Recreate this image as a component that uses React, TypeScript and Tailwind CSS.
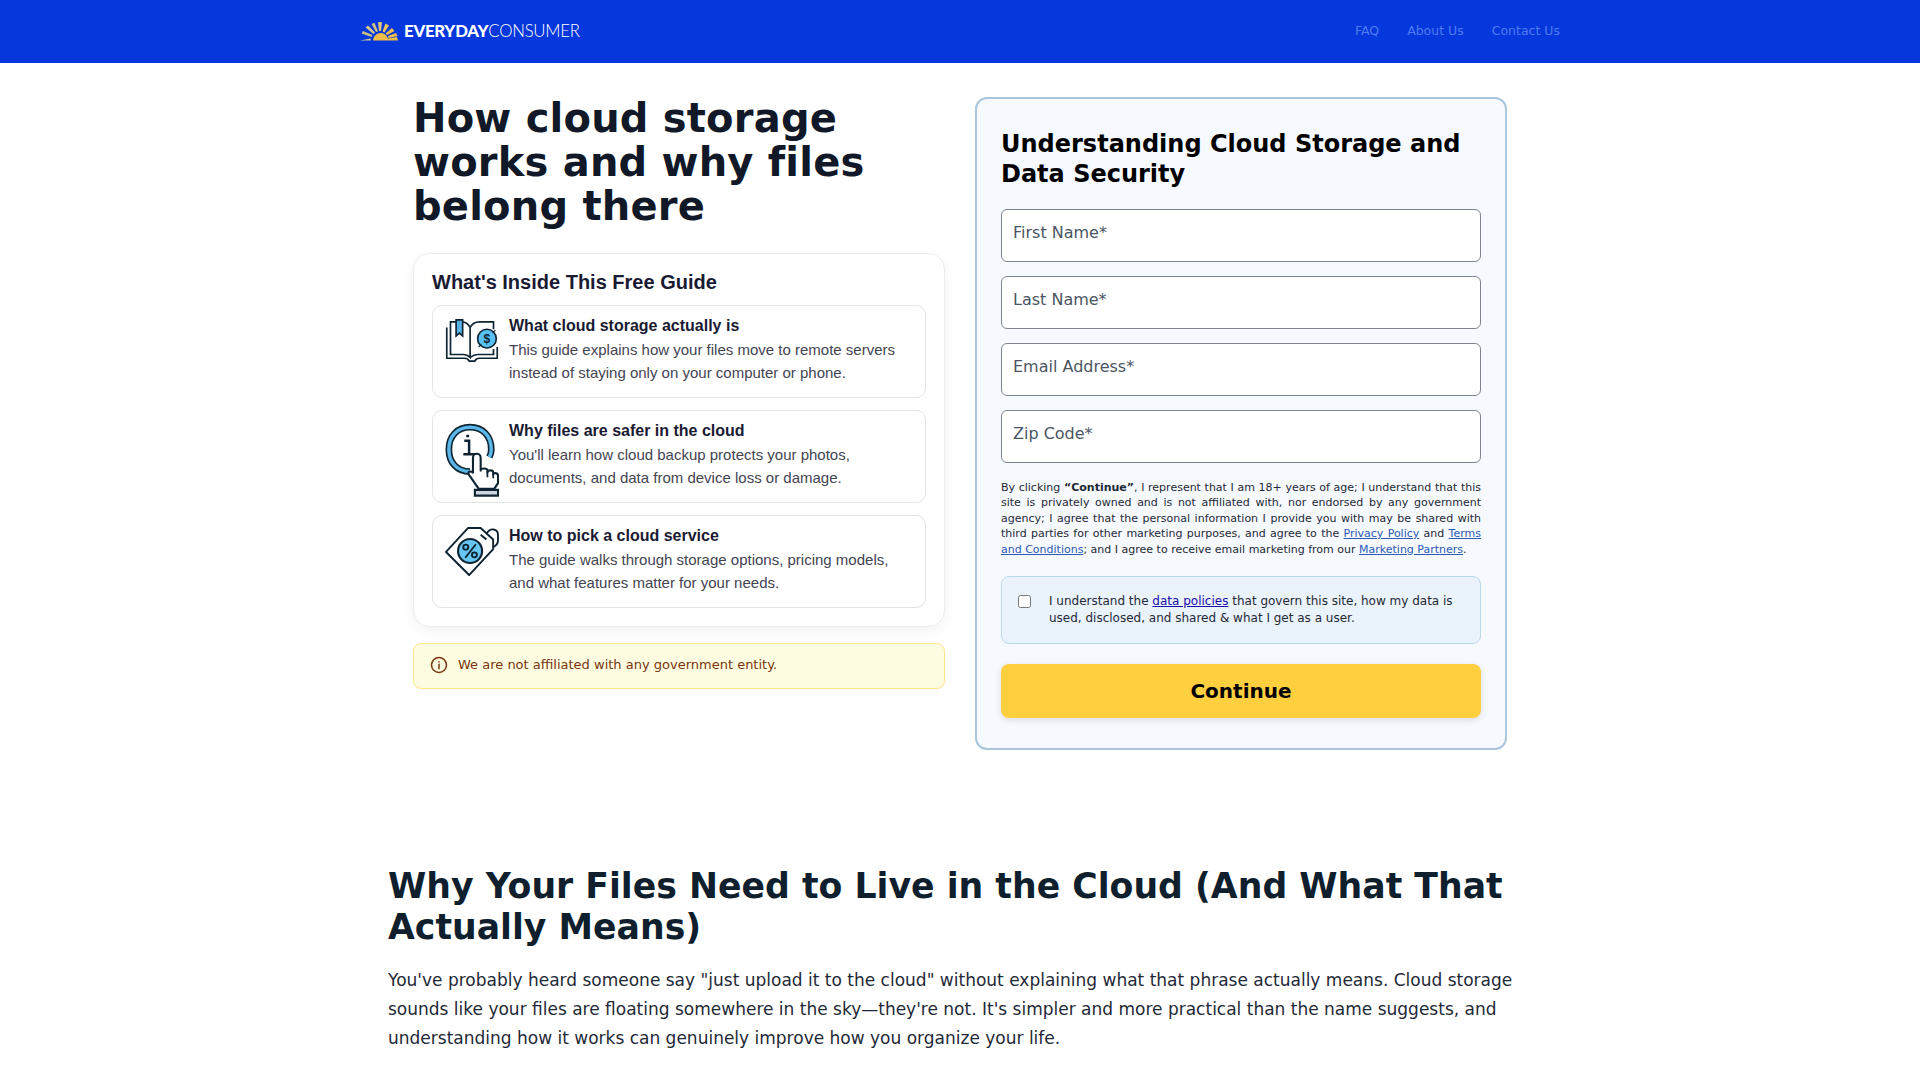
const guideItems = [
  {
    title: 'What cloud storage actually is',
    lines: ['This guide explains how your files move to remote servers', 'instead of staying only on your computer or phone.'],
    icon: 'book',
  },
  {
    title: 'Why files are safer in the cloud',
    lines: ["You'll learn how cloud backup protects your photos,", 'documents, and data from device loss or damage.'],
    icon: 'hand',
  },
  {
    title: 'How to pick a cloud service',
    lines: ['The guide walks through storage options, pricing models,', 'and what features matter for your needs.'],
    icon: 'tag',
  },
];

const fields = ['First Name*', 'Last Name*', 'Email Address*', 'Zip Code*'];

function Logo() {
  return (
    <svg width="38" height="19" viewBox="0 0 38 19" className="shrink-0">
      <path d="M0 18.5 L10.5 16.5 L11 18.5 Z" fill="#d6c88e" />
      <path d="M1.5 11.5 L11.5 15 L12.5 13 L3 9 Z" fill="#c9bd86" />
      <path d="M5.5 5.5 L13.5 12 L15 10.5 L8 3.5 Z" fill="#d8c98a" />
      <path d="M11.5 2 L16 10 L18 9.5 L14.5 0.8 Z" fill="#cfc084" />
      <path d="M18 0 L19 9 L21 9 L22 0.3 Z" fill="#e0c878" />
      <path d="M25.5 1.5 L22.5 9.5 L24.5 10.5 L29 3.5 Z" fill="#ebc35c" />
      <path d="M32 6 L25.5 11.5 L27 13 L34.5 9 Z" fill="#eebf4c" />
      <path d="M36 11 L28 14 L28.5 16 L37.5 14 Z" fill="#f0c04a" />
      <path d="M13 18.5 C13.5 13 18 10.5 22 11 C25 11.5 27 14 28 16.5 L37 15 L38 18.5 Z" fill="#eebd48" />
    </svg>
  );
}

function GuideIcon({ name }: { name: string }) {
  if (name === 'book') {
    return (
      <svg width="54" height="43" viewBox="0 0 56 46" fill="none" stroke="#0f2433" strokeWidth="1.8" className="mt-[3px] shrink-0">
        <path d="M1 9v33h19c3 0 4 1 5 3h6c1-2 2-3 5-3h19V30" />
        <path d="M5 3v35h14c3 0 5 1 7 3V9c-2-4-5-6-9-6H5z" fill="#fff" />
        <path d="M26 41c3-2 5-3 8-3h17v-6M26 9c2-4 6-6 10-6h15v8" />
        <path d="M11 1h7v17l-3.5-3-3.5 3V1z" fill="#58b4e6" />
        <circle cx="44" cy="21" r="10" fill="#58c1f2" />
        <path d="M35 30l3-3M50 15l3-3" strokeWidth="1.2" />
        <text x="44" y="26" fontSize="13" fontWeight="700" textAnchor="middle" fill="#0f2433" stroke="none" fontFamily="'Liberation Sans', sans-serif">$</text>
      </svg>
    );
  }
  if (name === 'hand') {
    return (
      <svg width="54" height="74" viewBox="0 0 56 76" fill="none" className="mt-[2px] shrink-0">
        <path d="M26 50C12 50 4 40 4 27 4 13 13 4 26 4c13 0 22 9 22 23 0 3-1 6-2 8" stroke="#0f2433" strokeWidth="7" />
        <path d="M26 50C12 50 4 40 4 27 4 13 13 4 26 4c13 0 22 9 22 23 0 3-1 6-2 8" stroke="#5ab7e8" strokeWidth="3.6" />
        <path d="M20 18h5v13M19 32h13M22 13h3" stroke="#0f2433" strokeWidth="2.6" />
        <path d="M29 50V36c0-6 8-6 8 0v13c0-3 7-3 7 0v2c0-3 6-3 6 0v2c0-2 5-2 5 1v8l-4 6H35l-9-13c-3-3-2-7 3-4z" fill="#fff" stroke="#0f2433" strokeWidth="2.2" strokeLinejoin="round" />
        <path d="M44 50v6M50 52v5" stroke="#0f2433" strokeWidth="1.8" />
        <path d="M31 69h24v6H31z" fill="#ccd6e0" stroke="#0f2433" strokeWidth="2.2" />
      </svg>
    );
  }
  return (
    <svg width="54" height="50" viewBox="0 0 56 52" fill="none" stroke="#0f2433" strokeWidth="2" strokeLinejoin="round" className="shrink-0">
      <path d="M1 27 L24 2 H37 L50 14 V24 L25 51 Z" fill="#fff" />
      <path d="M37 9 L43 14 M43 8 C47 1 55 3 55 9 V15 C55 19 52 21 50 22" />
      <circle cx="26" cy="26" r="12.5" fill="#67c6f2" strokeWidth="2.2" />
      <path d="M21 33 L32 19" strokeWidth="2" />
      <circle cx="21.5" cy="22" r="2.6" />
      <circle cx="30.5" cy="30" r="2.6" />
    </svg>
  );
}

function GuideCard() {
  return (
    <div className="rounded-2xl border border-[#ececec] bg-white px-[18px] pb-[18px] pt-[14px] shadow-[0_4px_14px_rgba(0,0,0,0.05)] font-['Liberation_Sans',Arial,sans-serif]">
      <h3 className="mb-[9px] text-[20px] font-bold leading-[28px] text-[#1a1a33]">What's Inside This Free Guide</h3>
      <div className="flex flex-col gap-3">
        {guideItems.map((item) => (
          <div key={item.title} className="flex h-[93px] gap-[10px] rounded-[10px] border border-[#e2e4e8] bg-white pl-[12px] pt-[10px]">
            <GuideIcon name={item.icon} />
            <div className="min-w-0">
              <div className="text-[16px] font-bold leading-[20px] text-[#1a1a33]">{item.title}</div>
              <div className="mt-[2px] text-[15px] leading-[23px] text-[#444452]">
                {item.lines.map((line) => (
                  <div key={line} className="whitespace-nowrap">{line}</div>
                ))}
              </div>
            </div>
          </div>
        ))}
      </div>
    </div>
  );
}

export default function App() {
  return (
    <div className="min-h-screen bg-white font-['DejaVu_Sans',sans-serif] text-[#111827]">
      <header className="h-[63px] bg-[#0437dc]">
        <div className="mx-auto flex h-[62px] max-w-[1200px] items-center justify-between">
          <div className="flex items-center gap-[6px]">
            <Logo />
            <div className="text-[16.8px] tracking-[-0.25px] text-white font-['Lato',sans-serif]">
              <span className="font-black">EVERYDAY</span>
              <span className="font-light">CONSUMER</span>
            </div>
          </div>
          <nav className="flex gap-7 text-[12.5px] text-[#4f7df0]">
            <a>FAQ</a>
            <a>About Us</a>
            <a>Contact Us</a>
          </nav>
        </div>
      </header>

      <main className="mx-auto flex max-w-[1094px] items-start gap-[30px] pt-[34px]">
        <div className="w-[532px] shrink-0">
          <h1 className="-mt-[1px] mb-[25px] text-[40px] font-bold leading-[44px] tracking-[0.2px] text-[#111827]">
            How cloud storage works and why files belong there
          </h1>
          <GuideCard />
          <div className="mt-[16px] flex h-[46px] items-center gap-[10px] rounded-lg border border-[#fde68a] bg-[#fefce0] pb-[2px] pl-[16px] text-[13px] text-[#78350f]">
            <svg width="18" height="18" viewBox="0 0 24 24" fill="none" stroke="#78350f" strokeWidth="2" strokeLinecap="round" className="shrink-0">
              <circle cx="12" cy="12" r="10" />
              <path d="M12 11v6M12 7.5v.5" />
            </svg>
            <span>We are not affiliated with any government entity.</span>
          </div>
        </div>

        <form className="w-[532px] shrink-0 rounded-xl border-2 border-[#a9c6dc] bg-[#f6f9fe] px-6 pb-[30px] pt-[30px]">
          <h2 className="mb-[20px] text-[24px] font-bold leading-[30px] text-black">
            Understanding Cloud Storage and Data Security
          </h2>
          <div className="flex flex-col gap-[14px]">
            {fields.map((field) => (
              <div key={field} className="h-[53px] rounded-md border border-[#7d8690] bg-white px-[11px] pt-[12px] text-[16px] leading-[22px] text-[#4b5563]">
                {field}
              </div>
            ))}
          </div>
          <p className="mt-[17px] text-justify text-[11px] leading-[15.4px] text-[#1f2937]">
            By clicking <strong>“Continue”</strong>, I represent that I am 18+ years of age; I understand that this site is privately owned and is not affiliated with, nor endorsed by any government agency; I agree that the personal information I provide you with may be shared with third parties for other marketing purposes, and agree to the{' '}
            <a className="text-[#2b59b5] underline">Privacy Policy</a> and{' '}
            <a className="text-[#2b59b5] underline">Terms and Conditions</a>; and I agree to receive email marketing from our{' '}
            <a className="text-[#2b59b5] underline">Marketing Partners</a>.
          </p>
          <div className="mt-[19px] flex h-[68px] gap-[18px] rounded-lg border border-[#bcd7ea] bg-[#eaf2fb] pl-[16px] pt-[16px]">
            <input type="checkbox" className="mt-[2px] h-[13px] w-[13px] shrink-0" />
            <div className="text-[12px] leading-[17px] text-[#1f2937]">
              I understand the <a className="text-[#1a0dab] underline">data policies</a> that govern this site, how my data is
              <br />
              used, disclosed, and shared &amp; what I get as a user.
            </div>
          </div>
          <button type="button" className="mt-[20px] h-[54px] w-full rounded-lg bg-[#ffcf40] text-[20px] font-bold text-black shadow-[0_2px_6px_rgba(0,0,0,0.12)]">
            Continue
          </button>
        </form>
      </main>

      <article className="mx-auto mt-[116px] max-w-[1144px]">
        <h2 className="text-[34.7px] font-bold leading-[41px] text-[#0f1f2e]">
          Why Your Files Need to Live in the Cloud (And What That Actually Means)
        </h2>
        <p className="mt-[18px] text-[17px] leading-[29px] text-[#1f2937]">
          You've probably heard someone say "just upload it to the cloud" without explaining what that phrase actually means. Cloud storage sounds like your files are floating somewhere in the sky—they're not. It's simpler and more practical than the name suggests, and understanding how it works can genuinely improve how you organize your life.
        </p>
      </article>
    </div>
  );
}
